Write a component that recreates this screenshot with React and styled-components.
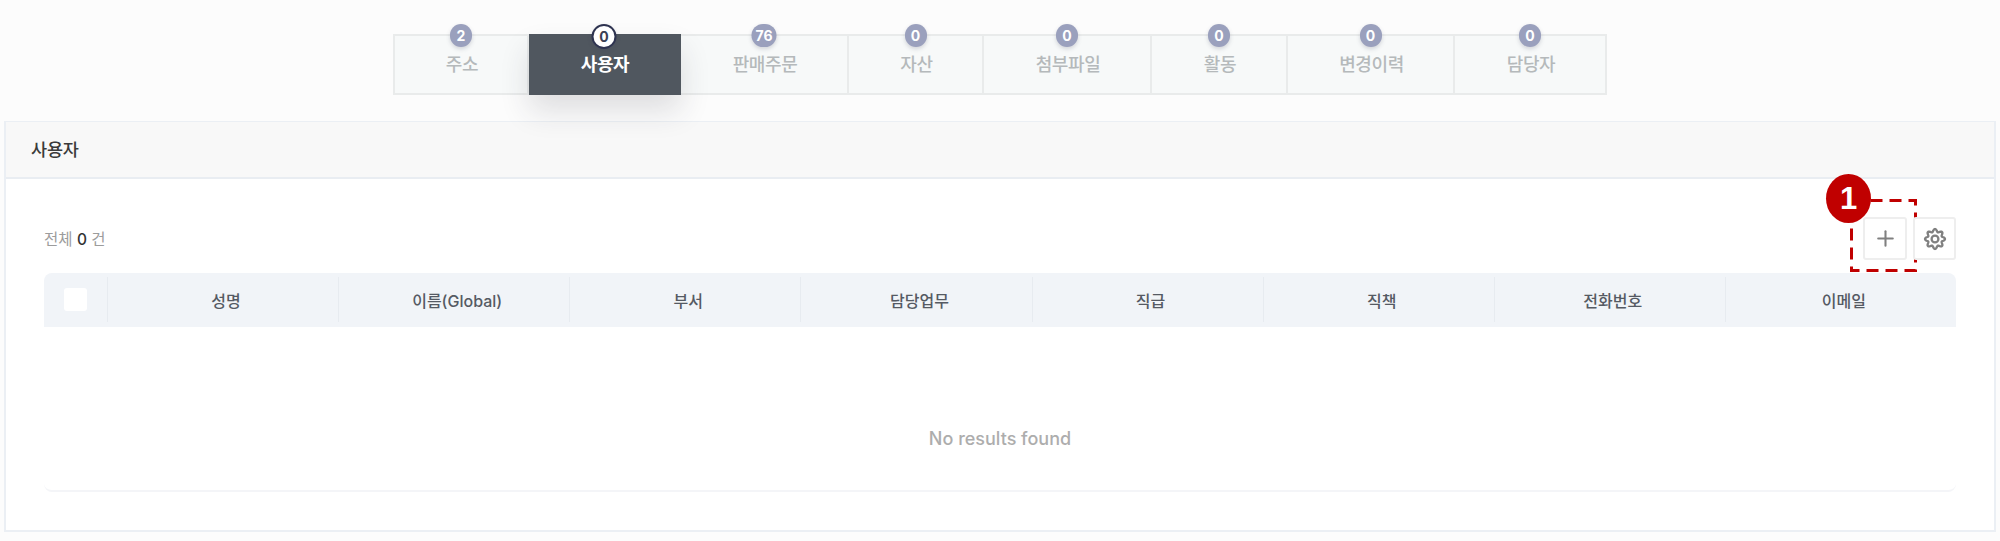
import React from 'react'
import styled, { createGlobalStyle } from 'styled-components'
import { Plus } from 'lucide-react'

const GlobalStyle = createGlobalStyle`
html, body {
    margin: 0;
    padding: 0;
    background: #fcfcfc;
}
body {
    font-family: Inter, "Noto Sans CJK KR", "Liberation Sans", sans-serif;
}
* {
    box-sizing: border-box;
}
`

const Page = styled.div`
width: 2000px;
height: 541px;
padding-top: 34px;
overflow: hidden;
`

const TabBar = styled.ul`
display: flex;
justify-content: center;
height: 61px;
margin: 0;
padding: 0;
list-style: none;
`

const Tab = styled.li`
position: relative;
display: flex;
align-items: center;
justify-content: center;
width: ${props => props.$width}px;
padding: 0 0 3px 2px;
font-size: 18px;
font-weight: ${props => (props.$active ? 600 : 500)};
letter-spacing: -0.4px;
color: ${props => (props.$active ? '#ffffff' : '#b5b9bb')};
background: ${props => (props.$active ? '#50575f' : '#f7f9f9')};
border: 2px solid ${props => (props.$active ? '#50575f' : '#e9ebeb')};
border-left-width: ${props => (props.$first ? 2 : 0)}px;
box-shadow: ${props => (props.$active ? '0 16px 30px rgba(40, 45, 55, 0.14)' : 'none')};
z-index: ${props => (props.$active ? 1 : 0)};
`

const Count = styled.span`
position: absolute;
top: -12px;
left: 50%;
transform: translateX(-50%);
display: flex;
align-items: center;
justify-content: center;
min-width: ${props => (props.$active ? 25 : 22)}px;
height: ${props => (props.$active ? 25 : 23)}px;
padding: 0 4px;
border-radius: 13px;
font-size: 14px;
font-weight: 700;
letter-spacing: 0;
color: ${props => (props.$active ? '#3a3f55' : '#ffffff')};
background: ${props => (props.$active ? '#ffffff' : '#9aa0bd')};
border: ${props => (props.$active ? '2px solid #2e3350' : 'none')};
box-shadow: 0 2px 4px rgba(60, 65, 90, 0.2);
`

const Panel = styled.section`
height: 411px;
margin: 26px 4px 0;
background: #fff;
border: 2px solid #ebeff4;
border-top-width: 1px;
`

const PanelHeader = styled.h2`
display: flex;
align-items: center;
height: 57px;
margin: 0;
padding-left: 25px;
padding-bottom: 2px;
font-size: 17.5px;
font-weight: 500;
letter-spacing: -0.2px;
color: #3a3a3a;
background: #f8f8f8;
border-bottom: 2px solid #e9edf2;
`

const PanelBody = styled.div`
padding: 38px 38px 0;
`

const Toolbar = styled.div`
display: flex;
align-items: center;
justify-content: space-between;
height: 43px;
margin-bottom: 13px;
`

const Total = styled.p`
margin: 0 0 2px;
font-size: 15.5px;
color: #9c9c9c;
b {
    font-weight: 500;
    color: #333;
}
`

const Actions = styled.div`
display: flex;
column-gap: 6px;
`

const IconButton = styled.button`
position: relative;
display: flex;
align-items: center;
justify-content: center;
width: ${props => props.$width}px;
height: 43px;
padding: 0;
color: #808080;
background: #fff;
border: 2px solid #eeeeee;
border-radius: 3px;
`

const DashedBox = styled.svg`
position: absolute;
left: -15px;
top: -20px;
width: 67px;
height: 73px;
pointer-events: none;
`

const Marker = styled.span`
position: absolute;
left: -39px;
top: -45px;
display: flex;
align-items: center;
justify-content: center;
width: 45px;
height: 49px;
border-radius: 50%;
font-size: 31px;
font-weight: 700;
color: #fff;
background: #c00000;
`

const TableHead = styled.div`
display: grid;
grid-template-columns: 63px repeat(8, 1fr);
height: 54px;
padding: 4px 0 5px;
background: #f1f4f8;
border-radius: 8px 8px 0 0;
`

const CheckCell = styled.div`
display: flex;
align-items: center;
justify-content: center;
`

const Check = styled.span`
width: 23px;
height: 23px;
background: #fff;
border-radius: 3px;
`

const HeadCell = styled.div`
display: flex;
align-items: center;
justify-content: center;
padding: 1px 0 0 6px;
font-size: 16px;
font-weight: 500;
color: #555a63;
border-left: 1px solid #e7ebf0;
`

const EmptyRow = styled.div`
height: 165px;
padding-top: 99px;
text-align: center;
font-size: 18px;
font-weight: 500;
line-height: 26px;
color: #adadad;
border-bottom: 2px solid #f4f5f8;
border-radius: 0 0 8px 8px;
`

// wavy outline of the gear, eight lobes
const gearPoints = Array.from({ length: 96 }, (_, i) => {
    const angle = (i / 96) * Math.PI * 2
    const radius = 8.6 + 1.4 * Math.cos(angle * 8)
    return `${(12 + radius * Math.cos(angle)).toFixed(2)},${(12 + radius * Math.sin(angle)).toFixed(2)}`
}).join(' ')

function GearIcon() {
    return (
        <svg width="24" height="24" viewBox="0 0 24 24" fill="none" stroke="currentColor" strokeWidth="2.3">
            <polygon points={gearPoints} strokeLinejoin="round" />
            <circle cx="12" cy="12" r="3.4" />
        </svg>
    )
}

const tabs = [
    { label: '주소', count: 2, width: 136 },
    { label: '사용자', count: 0, width: 152, active: true },
    { label: '판매주문', count: 76, width: 168 },
    { label: '자산', count: 0, width: 135 },
    { label: '첨부파일', count: 0, width: 168 },
    { label: '활동', count: 0, width: 136 },
    { label: '변경이력', count: 0, width: 167 },
    { label: '담당자', count: 0, width: 152 },
]

const columns = ['성명', '이름(Global)', '부서', '담당업무', '직급', '직책', '전화번호', '이메일']

function App() {
    return (
        <Page>
            <GlobalStyle />
            <TabBar>
                {tabs.map((tab, key) => (
                    <Tab key={tab.label} $width={tab.width} $active={tab.active} $first={key === 0}>
                        <Count $active={tab.active}>{tab.count}</Count>
                        {tab.label}
                    </Tab>
                ))}
            </TabBar>
            <Panel>
                <PanelHeader>사용자</PanelHeader>
                <PanelBody>
                    <Toolbar>
                        <Total>전체 <b>0</b> 건</Total>
                        <Actions>
                            <IconButton $width={44}>
                                <Plus size={25} strokeWidth={2} />
                                <DashedBox viewBox="0 0 67 73">
                                    <rect x="1.5" y="1.5" width="64" height="70" fill="none" stroke="#c00000" strokeWidth="3" strokeDasharray="12 7" />
                                </DashedBox>
                                <Marker>1</Marker>
                            </IconButton>
                            <IconButton $width={43}>
                                <GearIcon />
                            </IconButton>
                        </Actions>
                    </Toolbar>
                    <TableHead>
                        <CheckCell><Check /></CheckCell>
                        {columns.map(name => <HeadCell key={name}>{name}</HeadCell>)}
                    </TableHead>
                    <EmptyRow>No results found</EmptyRow>
                </PanelBody>
            </Panel>
        </Page>
    )
}

export default App
